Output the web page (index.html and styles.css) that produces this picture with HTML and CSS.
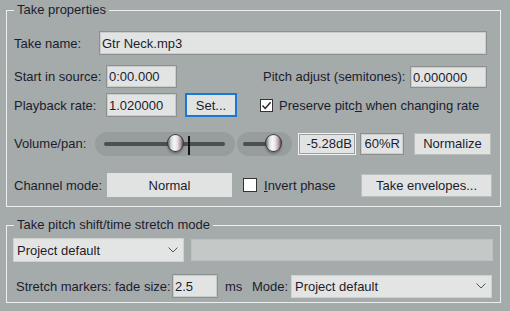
FILE: index.html
```html
<!DOCTYPE html>
<html>
<head>
<meta charset="utf-8">
<link rel="stylesheet" href="styles.css">
</head>
<body>
<fieldset class="group g1">
  <legend>Take properties</legend>
  <div class="row r1">
    <span class="lbl w85">Take name:</span>
    <div class="field fname">Gtr Neck.mp3</div>
  </div>
  <div class="row r2">
    <span class="lbl w92">Start in source:</span>
    <div class="field fshort">0:00.000</div>
    <span class="lbl pitchlbl">Pitch adjust (semitones):</span>
    <div class="field fpitch">0.000000</div>
  </div>
  <div class="row r3">
    <span class="lbl w92">Playback rate:</span>
    <div class="field fshort">1.020000</div>
    <div class="btn setbtn">Set...</div>
    <div class="check checked chk1">
      <svg width="11" height="11" viewBox="0 0 11 11"><polyline points="1.5,5.5 4.2,8.4 9.6,2.2" fill="none" stroke="#222" stroke-width="1.4"/></svg>
    </div>
    <span class="chktext1">Preserve pitc<u>h</u> when changing rate</span>
  </div>
  <div class="row r4">
    <span class="lbl w81">Volume/pan:</span>
    <div class="pill vol">
      <div class="track voltrack"></div>
      <div class="knob volknob"></div>
      <div class="mark"></div>
    </div>
    <div class="pill pan">
      <div class="track pantrack"></div>
      <div class="knob panknob"></div>
    </div>
    <div class="vbox db">-5.28dB</div>
    <div class="vbox pct">60%R</div>
    <div class="btn normbtn">Normalize</div>
  </div>
  <div class="row r5">
    <span class="lbl w93">Channel mode:</span>
    <div class="flat normal">Normal</div>
    <div class="chkwrap">
      <div class="check chk2"></div>
      <span class="chktext2"><u>I</u>nvert phase</span>
    </div>
    <div class="btn envbtn">Take envelopes...</div>
  </div>
</fieldset>
<fieldset class="group g2">
  <legend>Take pitch shift/time stretch mode</legend>
  <div class="row ra">
    <div class="combo combo1">
      <span>Project default</span>
      <svg width="10" height="6" viewBox="0 0 10 6"><polyline points="0.5,0.5 5,5 9.5,0.5" fill="none" stroke="#555" stroke-width="1"/></svg>
    </div>
    <div class="disabled"></div>
  </div>
  <div class="row rb">
    <span class="lbl stretchlbl">Stretch markers: fade size:</span>
    <div class="field ffade">2.5</div>
    <span class="lbl mslbl">ms</span>
    <span class="lbl modelbl">Mode:</span>
    <div class="combo combo2">
      <span>Project default</span>
      <svg width="10" height="6" viewBox="0 0 10 6"><polyline points="0.5,0.5 5,5 9.5,0.5" fill="none" stroke="#555" stroke-width="1"/></svg>
    </div>
  </div>
</fieldset>
</body>
</html>
```
FILE: styles.css
```css
* { box-sizing: border-box; }
html, body { margin: 0; padding: 0; }
body {
  width: 510px;
  height: 311px;
  overflow: hidden;
  background: #a5abaa;
  font-family: "Liberation Sans", Arial, sans-serif;
  font-size: 13px;
  color: #1c1c2e;
}
.group {
  margin: 0 0 0 6px;
  width: 495px;
  min-width: 0;
  border: 1px solid #eceeed;
  padding: 0 7px;
}
.group legend {
  padding: 0 3px;
  margin-left: 0;
  line-height: 16px;
  height: 16px;
}
.g1 { margin-top: 2px; padding-top: 13px; padding-bottom: 9px; }
.g2 { margin-top: 10px; padding: 5px 6px 4px 6px; }
.g2 legend { margin-left: 1px; }

.row { display: flex; align-items: center; }
.lbl { white-space: nowrap; flex: none; }
.w81 { width: 81px; }
.w85 { width: 85px; }
.w92 { width: 92px; }
.w93 { width: 93px; }

.r1 { height: 24px; }
.r2 { height: 23px; margin-top: 10px; }
.r3 { height: 24px; margin-top: 5px; }
.r4 { height: 25px; margin-top: 14px; }
.r5 { height: 24px; margin-top: 17px; }

.field {
  flex: none;
  display: flex;
  align-items: center;
  background: #e2e4e3;
  border: 1px solid #8c9190;
  box-shadow: inset 0 0 0 1px #c9cccb;
  padding: 0 2px;
  white-space: nowrap;
}
.fname { width: 388px; height: 24px; }
.fshort { width: 71px; height: 23px; }
.r3 .fshort { height: 24px; }
.pitchlbl { width: 147px; margin-left: 86px; text-align: right; padding-right: 5px; }
.fpitch { width: 77px; height: 22px; margin-top: 1px; }

.btn {
  flex: none;
  display: flex;
  align-items: center;
  justify-content: center;
  background: #e1e3e2;
  border: 1px solid #b9bdbc;
  white-space: nowrap;
}
.setbtn { width: 52px; height: 24px; margin-left: 8px; border: 2px solid #1779d4; }
.normbtn { width: 77px; height: 22px; margin-left: 10px; }
.envbtn { width: 131px; height: 23px; }

.check {
  flex: none;
  width: 13px;
  height: 13px;
  background: #ffffff;
  border: 1px solid #333333;
  display: flex;
  align-items: center;
  justify-content: center;
}
.chk1 { margin-left: 23px; }
.chktext1 { margin-left: 6px; white-space: nowrap; }
.chkwrap { flex: none; width: 118px; margin-left: 11px; display: flex; align-items: center; }
.chk2 { width: 14px; height: 14px; }
.chktext2 { margin-left: 7px; white-space: nowrap; }

.pill {
  flex: none;
  position: relative;
  height: 24px;
  border-radius: 12px;
  background: #979d9c;
}
.vol { width: 140px; }
.pan { width: 55px; margin-left: 2px; }
.track {
  position: absolute;
  top: 10px;
  height: 4px;
  border-radius: 2px;
  background: #4a4f4f;
}
.voltrack { left: 9px; width: 121px; }
.pantrack { left: 6px; width: 24px; }
.knob {
  position: absolute;
  top: 2px;
  width: 17px;
  height: 18px;
  border-radius: 50%;
  border: 1px solid #3a3a3e;
  background: linear-gradient(90deg, #6c7172 0%, #d6d9da 22%, #f7f7f7 42%, #e9dfe6 62%, #b8a2b3 82%, #55555a 100%);
  box-shadow: 0 2px 2px rgba(40, 40, 40, 0.35);
}
.volknob { left: 72px; }
.panknob { left: 28px; }
.mark {
  position: absolute;
  left: 93px;
  top: 4px;
  width: 2px;
  height: 19px;
  background: #151515;
}

.vbox {
  flex: none;
  height: 22px;
  display: flex;
  align-items: center;
  justify-content: flex-end;
  padding-right: 3px;
  background: #e2e4e3;
  border: 1px solid #8c9190;
  white-space: nowrap;
}
.db { width: 58px; margin-left: 6px; border-color: #f0f2f1; box-shadow: inset 0 0 0 1px #9ba09f; }
.pct { width: 44px; margin-left: 4px; box-shadow: inset 0 0 0 1px #c9cccb; }

.flat {
  flex: none;
  display: flex;
  align-items: center;
  justify-content: center;
  background: #e1e3e2;
}
.normal { width: 125px; height: 24px; }

.combo {
  flex: none;
  display: flex;
  align-items: center;
  justify-content: space-between;
  height: 24px;
  padding: 0 5px 0 3px;
  background: #e3e5e4;
  border: 1px solid #cfd2d1;
  white-space: nowrap;
}
.combo svg { flex: none; }
.combo1 { width: 171px; }
.combo2 { width: 201px; height: 23px; }
.disabled {
  flex: none;
  width: 302px;
  height: 22px;
  margin-left: 7px;
  background: #c4c8c7;
  border: 1px solid #bcc0bf;
}
.ra { height: 24px; }
.rb { height: 24px; margin-top: 12px; }
.stretchlbl { width: 156px; margin-left: 3px; }
.ffade { width: 46px; height: 24px; }
.mslbl { width: 27px; margin-left: 7px; }
.modelbl { width: 39px; }
```
